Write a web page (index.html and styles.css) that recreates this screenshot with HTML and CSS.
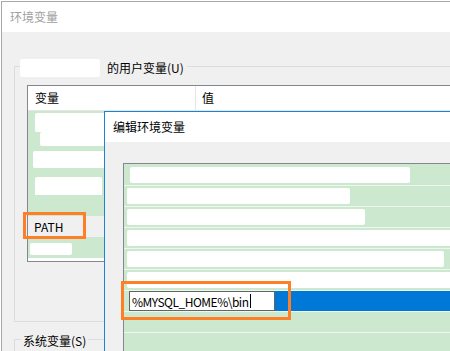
FILE: index.html
```html
<!DOCTYPE html>
<html lang="zh-CN">
  <head>
    <meta charset="UTF-8" />
    <title>环境变量</title>
    <link rel="stylesheet" href="styles.css">
  </head>
  <body>
    <div class="desk">
      <div class="win">
        <div class="win-title">环境变量</div>
        <div class="win-body">
          <div class="group user">
            <div class="caption"><span class="blot cap-blot"></span>的用户变量(U)</div>
            <div class="list">
              <div class="list-head">
                <span class="col-name">变量</span>
                <span class="col-val">值</span>
              </div>
              <div class="row"><span class="blot o0"></span></div>
              <div class="row"><span class="blot o1"></span></div>
              <div class="row"><span class="blot o2"></span></div>
              <div class="row"><span class="blot o3"></span></div>
              <div class="row"></div>
              <div class="row current">PATH</div>
              <div class="row"><span class="blot o6"></span></div>
            </div>
          </div>
          <div class="group sys">
            <div class="caption">系统变量(S)</div>
          </div>
        </div>
      </div>

      <div class="dialog">
        <div class="dlg-title">编辑环境变量</div>
        <div class="dlg-body">
          <div class="paths">
            <div class="prow"><span class="blot d0"></span><span class="blot d0b"></span></div>
            <div class="prow"><span class="blot d1"></span><span class="blot d1b"></span></div>
            <div class="prow"><span class="blot d2"></span></div>
            <div class="prow"><span class="blot d3"></span></div>
            <div class="prow"><span class="blot d4"></span><span class="blot d4b"></span></div>
            <div class="prow"><span class="blot d5"></span></div>
            <div class="prow editing">
              <div class="edit">%MYSQL_HOME%\bin<span class="caret"></span></div>
              <div class="sel"></div>
            </div>
            <div class="prow"></div>
            <div class="prow"></div>
          </div>
        </div>
      </div>

      <!-- annotation boxes -->
      <div class="mark mark-path"></div>
      <div class="mark mark-edit"></div>
    </div>
  </body>
</html>
```

FILE: styles.css
```css
body {
  margin: 0;
  background: #fff;
  font-family: "Noto Sans CJK SC", "Microsoft YaHei", sans-serif;
  font-size: 12px;
  color: #000;
}
.desk {
  position: relative;
  width: 450px;
  height: 351px;
  overflow: hidden;
}
.win {
  margin: 1px 0 0 1px;
  border-left: 1px solid #a8a8a8;
  border-top: 1px solid #a8a8a8;
  height: 350px;
}
.win-title {
  height: 30px;
  line-height: 30px;
  padding-left: 8px;
  color: #a0a0a0;
  background: #fff;
}
.win-body {
  background: #f0f0f0;
  height: 320px;
  padding: 34px 0 0 12px;
  box-sizing: border-box;
}
.group {
  position: relative;
  width: 600px;
  border: 1px solid #dcdcdc;
}
.user {
  height: 256px;
  box-sizing: border-box;
  padding: 18px 0 0 12px;
}
.sys {
  margin-top: 17px;
  height: 40px;
}
.caption {
  position: absolute;
  top: -8px;
  left: 5px;
  height: 18px;
  line-height: 18px;
  padding-right: 3px;
  display: flex;
  align-items: center;
  background: #f0f0f0;
}
.sys .caption {
  left: 6px;
  padding: 0 2px;
}
.blot {
  display: block;
  background: #fff;
  border-radius: 2px;
}
.cap-blot {
  width: 80px;
  height: 18px;
  margin-right: 7px;
}

.list {
  width: 500px;
  height: 175px;
  border: 1px solid #828790;
  background: #fff;
}
.list-head {
  display: flex;
  height: 24px;
  line-height: 24px;
  border-bottom: 1px solid #e5e5e5;
}
.col-name {
  width: 160px;
  padding-left: 7px;
  border-right: 1px solid #e5e5e5;
}
.col-val {
  padding-left: 6px;
}
.row {
  height: 21px;
  background: #cce8cf;
  position: relative;
}
.row .blot {
  position: absolute;
}
.o0 { left: 7px; top: 2px; width: 80px; height: 19px; }
.o1 { left: 12px; top: 0; width: 80px; height: 14px; }
.o2 { left: 5px; top: -2px; width: 75px; height: 17px; }
.o3 { left: 7px; top: 3px; width: 67px; height: 21px; }
.o6 { left: 2px; top: 6px; width: 42px; height: 12px; }
.row.current {
  background: #f0f0f0;
  line-height: 21px;
  padding-left: 6px;
}

.dialog {
  position: absolute;
  left: 104px;
  top: 111px;
  width: 400px;
  height: 240px;
  border-left: 1px solid #1883d7;
  border-top: 1px solid #1883d7;
}
.dlg-title {
  height: 30px;
  line-height: 30px;
  padding-left: 8px;
  background: #fff;
}
.dlg-body {
  background: #f0f0f0;
  height: 210px;
  padding: 21px 0 0 18px;
  box-sizing: border-box;
}
.paths {
  height: 300px;
  border-left: 1px solid #828790;
  border-top: 1px solid #828790;
  background: #fff;
}
.prow {
  position: relative;
  height: 20px;
  background: #cce8cf;
  border-top: 1px solid #eef7ef;
}
.prow:first-child {
  border-top-color: #cce8cf;
}
.prow .blot {
  position: absolute;
  top: 2px;
  height: 16px;
}
.d0 { left: 6px; width: 266px; }
.d0b { left: 260px; top: 5px; width: 26px; height: 13px; }
.d1 { left: 3px; width: 223px; }
.d1b { left: 3px; top: 14px; width: 175px; height: 5px; }
.d2 { left: 3px; top: 3px; width: 238px; height: 17px; }
.d3 { left: 3px; top: 1px; width: 330px; height: 18px; }
.d4 { left: 3px; top: 0; width: 290px; height: 18px; }
.d4b { left: 270px; top: 6px; width: 50px; height: 10px; }
.d5 { left: 3px; top: 0; width: 330px; height: 19px; }
.prow.editing {
  display: flex;
}
.edit {
  width: 146px;
  height: 20px;
  box-sizing: border-box;
  margin-left: 5px;
  border: 1px solid #646464;
  background: #fff;
  padding-left: 2px;
  letter-spacing: -0.5px;
  white-space: nowrap;
  display: flex;
  align-items: center;
}
.caret {
  width: 1px;
  height: 14px;
  background: #000;
  margin-left: 2px;
}
.sel {
  flex: 1;
  background: #0078d7;
}

.mark {
  position: absolute;
  border: 3px solid #ff7f27;
}
.mark-path {
  left: 23px;
  top: 212px;
  width: 57px;
  height: 21px;
}
.mark-edit {
  left: 121px;
  top: 281px;
  width: 164px;
  height: 33px;
}
```
